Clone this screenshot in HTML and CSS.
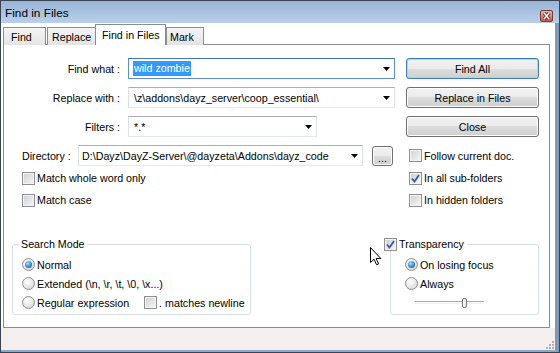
FILE: index.html
```html
<!DOCTYPE html>
<html lang="en">
  <head>
    <meta charset="utf-8">
    <title>Find in Files</title>
    <link rel="stylesheet" href="styles.css">
  </head>

  <body>
    <div class="window">
      <div class="titlebar">
        <span class="title">Find in Files</span>
        <span class="close">
          <svg width="11" height="10" viewBox="0 0 11 10">
            <path d="M3 2 L8 8 M8 2 L3 8" stroke="#5a1d18" stroke-width="3.2"/>
            <path d="M3 2 L8 8 M8 2 L3 8" stroke="#fff" stroke-width="1.6"/>
          </svg>
        </span>
      </div>
      <div class="client">
        <div class="tabs">
          <span class="tab tab-find">Find</span>
          <span class="tab tab-replace">Replace</span>
          <span class="tab tab-files active">Find in Files</span>
          <span class="tab tab-mark">Mark</span>
        </div>
        <div class="panel">
          <div class="fields">
            <div class="field">
              <span class="label">Find what :</span>
              <div class="combo wide focus">
                <span class="sel">wild zombie</span>
                <svg class="arrow" width="7" height="4"><polygon points="0,0 7,0 3.5,4" fill="#000"/></svg>
              </div>
            </div>
            <button class="btn default">Find All</button>
            <div class="field">
              <span class="label">Replace with :</span>
              <div class="combo wide">
                <span>\z\addons\dayz_server\coop_essential\</span>
                <svg class="arrow" width="7" height="4"><polygon points="0,0 7,0 3.5,4" fill="#000"/></svg>
              </div>
            </div>
            <button class="btn">Replace in Files</button>
            <div class="field">
              <span class="label">Filters :</span>
              <div class="combo short">
                <span>*.*</span>
                <svg class="arrow" width="7" height="4"><polygon points="0,0 7,0 3.5,4" fill="#000"/></svg>
              </div>
            </div>
            <button class="btn">Close</button>
            <div class="field dir">
              <span class="dir-label">Directory :</span>
              <div class="combo dir-combo">
                <span>D:\Dayz\DayZ-Server\@dayzeta\Addons\dayz_code</span>
                <svg class="arrow" width="7" height="4"><polygon points="0,0 7,0 3.5,4" fill="#000"/></svg>
              </div>
              <button class="btn browse">...</button>
            </div>
            <label class="check right"><span class="box"></span>Follow current doc.</label>
          </div>

          <div class="options">
            <label class="check left"><span class="box"></span>Match whole word only</label>
            <label class="check right">
              <span class="box"><svg width="11" height="11" viewBox="0 0 11 11"><path d="M2 5.5 L4.5 8.5 L9 2" fill="none" stroke="#3b5a9a" stroke-width="1.8"/></svg></span>In all sub-folders
            </label>
            <label class="check left"><span class="box"></span>Match case</label>
            <label class="check right"><span class="box"></span>In hidden folders</label>
          </div>

          <div class="groups">
            <fieldset class="group search-mode">
              <legend>Search Mode</legend>
              <label class="check row"><span class="radio on"></span>Normal</label>
              <label class="check row"><span class="radio"></span>Extended (\n, \r, \t, \0, \x...)</label>
              <div class="row">
                <label class="check"><span class="radio"></span>Regular expression</label>
                <label class="check newline"><span class="box"></span>. matches newline</label>
              </div>
            </fieldset>
            <fieldset class="group transparency">
              <legend>
                <label class="check">
                  <span class="box"><svg width="11" height="11" viewBox="0 0 11 11"><path d="M2 5.5 L4.5 8.5 L9 2" fill="none" stroke="#3b5a9a" stroke-width="1.8"/></svg></span>Transparency
                </label>
              </legend>
              <label class="check row"><span class="radio on"></span>On losing focus</label>
              <label class="check row"><span class="radio"></span>Always</label>
              <div class="row slider">
                <div class="track"><span class="thumb"></span></div>
              </div>
            </fieldset>
          </div>
        </div>
        <div class="footer">
          <svg class="grip" width="8" height="8">
            <rect x="6" y="0" width="2" height="2" fill="#b5b0b0"/>
            <rect x="3" y="3" width="2" height="2" fill="#b5b0b0"/>
            <rect x="6" y="3" width="2" height="2" fill="#b5b0b0"/>
            <rect x="0" y="6" width="2" height="2" fill="#b5b0b0"/>
            <rect x="3" y="6" width="2" height="2" fill="#b5b0b0"/>
            <rect x="6" y="6" width="2" height="2" fill="#b5b0b0"/>
          </svg>
        </div>
      </div>

      <svg class="cursor" width="13" height="19" viewBox="0 0 13 19">
        <path d="M0.5 0.5 L0.5 15.5 L4 12.2 L6.6 17.8 L8.6 16.9 L6.1 11.5 L10.8 11.5 Z" fill="#fff" stroke="#000" stroke-width="1"/>
      </svg>
    </div>
  </body>
</html>
```

FILE: styles.css
```css
body {
  margin: 0;
  font-family: "Liberation Sans", Arial, sans-serif;
  font-size: 10.7px;
  color: #000;
}
.window {
  position: relative;
  width: 560px;
  height: 353px;
  box-sizing: border-box;
  border: 1px solid #3a4350;
  display: flex;
  flex-direction: column;
  background: #fff;
}
.titlebar {
  height: 22px;
  flex-shrink: 0;
  display: flex;
  background: linear-gradient(#99b5d7, #b9d0ea);
}
.title {
  padding: 5px 0 0 4px;
  font-size: 11.8px;
}
.close {
  margin: auto 6px 1px auto;
  width: 11px;
  height: 10px;
  border: 1px solid #7c3a33;
  border-radius: 2px;
  background: linear-gradient(#eab4ab, #c65a4d);
  display: flex;
}
.client {
  flex: 1;
  display: flex;
  flex-direction: column;
  padding: 1px 5px 0 2px;
  border-right: 4px solid #8199b4;
  border-bottom: 2px solid #8ea9c8;
}

/* tabs */
.tabs {
  display: flex;
  align-items: flex-end;
  height: 21px;
  margin-bottom: -1px;
  position: relative;
  z-index: 1;
}
.tab {
  height: 18px;
  box-sizing: border-box;
  padding-top: 3px;
  margin-right: 1px;
  border: 1px solid #898c95;
  border-bottom: none;
  background: linear-gradient(#f5f5f5, #e3e3e3);
}
.tab-find { width: 43px; padding-left: 7px; }
.tab-replace { width: 50px; padding-left: 4px; }
.tab-files { width: 71px; padding-left: 6px; }
.tab-mark { width: 38px; padding-left: 3px; }
.tab.active {
  height: 21px;
  margin-left: -3px;
  margin-right: 0;
  padding-top: 4px;
  background: #fff;
}

.panel {
  height: 284px;
  box-sizing: border-box;
  border: 1px solid #898c95;
  background: #fff;
}
.fields {
  display: grid;
  grid-template-columns: 402px 133px;
  grid-auto-rows: 21px;
  row-gap: 8px;
  margin-top: 13px;
}
.field {
  display: flex;
  align-items: center;
}
.label {
  width: 116px;
  text-align: right;
  margin-right: 8px;
}
.combo {
  height: 21px;
  box-sizing: border-box;
  display: flex;
  align-items: center;
  padding: 0 4px 0 5px;
  border: 1px solid #abadb3;
  border-left-color: #dbdfe6;
  border-right-color: #dbdfe6;
  border-bottom-color: #e3e9ef;
  white-space: nowrap;
  overflow: hidden;
}
.combo.focus {
  border-color: #5d8fc4;
  border-top-color: #3d7bad;
}
.combo .arrow {
  margin-left: auto;
  flex-shrink: 0;
}
.wide { width: 267px; }
.short { width: 189px; }
.sel {
  margin-left: -1px;
  padding: 1px 1px 2px;
  background: #3399ff;
  color: #fff;
}
.dir {
  padding-left: 18px;
}
.dir-label {
  width: 56px;
}
.dir-combo {
  width: 285px;
  padding-left: 3px;
}

.btn {
  font: inherit;
  color: #000;
  height: 21px;
  padding: 0;
  border: 1px solid #707070;
  border-radius: 3px;
  background: linear-gradient(#f2f2f2, #ebebeb 50%, #dddddd 50%, #cfcfcf);
  box-shadow: inset 0 0 0 1px #fcfcfc;
}
.btn.default {
  border-color: #3c7fb1;
  box-shadow: inset 0 0 0 1px #9fdaf6;
}
.browse {
  width: 21px;
  height: 20px;
  margin-left: 9px;
  line-height: 22px;
}

.check {
  display: flex;
  align-items: center;
  gap: 2px;
  white-space: nowrap;
}
.check.left { padding-left: 18px; }
.check.right { padding-left: 3px; }
.box {
  width: 13px;
  height: 13px;
  box-sizing: border-box;
  flex-shrink: 0;
  border: 1px solid #8f8f8f;
  background: linear-gradient(135deg, #cbcfd5, #f7f7f7);
  box-shadow: inset 0 0 0 1px #f4f4f4;
  display: flex;
  align-items: center;
  justify-content: center;
}
.radio {
  width: 13px;
  height: 13px;
  box-sizing: border-box;
  flex-shrink: 0;
  border-radius: 50%;
  border: 1px solid #8e8f8f;
  background: radial-gradient(circle at 40% 35%, #fff, #d0d0d0);
  display: flex;
  align-items: center;
  justify-content: center;
}
.radio.on::after {
  content: "";
  width: 7px;
  height: 7px;
  border-radius: 50%;
  background: radial-gradient(circle at 40% 35%, #a8e4ff, #2a83c8 60%, #1a4a7a);
}

.options {
  display: grid;
  grid-template-columns: 402px 133px;
  grid-auto-rows: 22px;
  margin-top: 1px;
}

.groups {
  display: flex;
  justify-content: space-between;
  margin: 27px 10px 0 8px;
}
.group {
  margin: 0;
  padding: 4px 0 2px 0;
  border: 1px solid #d5dfe5;
  border-radius: 3px;
}
.group legend {
  height: 13px;
  line-height: 13px;
  padding: 0 2px;
  margin-left: 6px;
}
.search-mode {
  width: 239px;
  box-sizing: border-box;
}
.search-mode .row {
  height: 19px;
  padding-left: 9px;
}
.search-mode div.row {
  display: flex;
  align-items: center;
}
.newline {
  margin-left: 15px;
}
.transparency {
  width: 149px;
  box-sizing: border-box;
}
.transparency legend {
  margin-left: -7px;
  padding: 0 3px 0 0;
  background: #fff;
}
.transparency .row {
  height: 19px;
  padding-left: 14px;
}
.slider {
  display: flex;
  align-items: center;
}
.slider.row {
  padding-left: 24px;
}
.track {
  width: 69px;
  height: 1px;
  border-top: 1px solid #a8a8a8;
  border-bottom: 1px solid #f0f0f0;
  display: flex;
  align-items: center;
}
.thumb {
  width: 5px;
  height: 10px;
  box-sizing: border-box;
  margin-left: 47px;
  border: 1px solid #777;
  border-radius: 2px;
  background: linear-gradient(90deg, #fff, #e3e3e3);
}

.footer {
  flex: 1;
  margin: 0 -5px 0 -2px;
  background: #f5eeee;
  display: flex;
  justify-content: flex-end;
  align-items: flex-end;
}
.grip {
  margin: 0 1px 1px 0;
}
.cursor {
  position: absolute;
  left: 369px;
  top: 246px;
}
```
